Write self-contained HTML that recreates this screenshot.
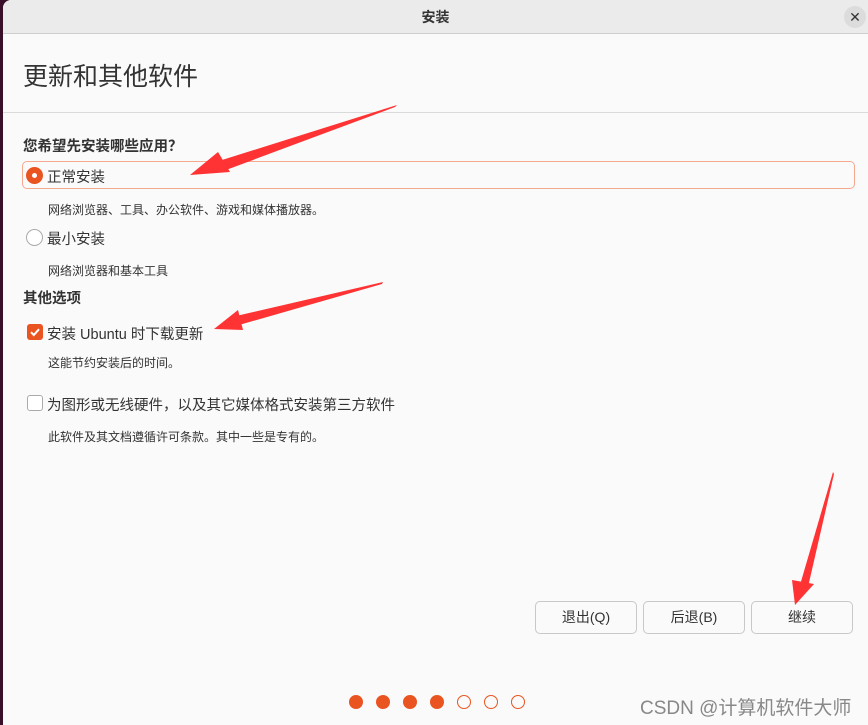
<!DOCTYPE html>
<html><head><meta charset="utf-8"><style>
*{margin:0;padding:0;box-sizing:border-box}
body{width:868px;height:725px;overflow:hidden;background:#3a0f2a;font-family:"Liberation Sans","Noto Sans CJK SC",sans-serif;color:#3d3d3d;position:relative}
.win{position:absolute;left:3px;top:0;width:865px;height:725px;background:#fafafa;border-top-left-radius:8px;overflow:hidden}
.tb{position:absolute;left:0;top:0;width:100%;height:34px;background:#ebebeb;border-bottom:1px solid #cfcfcf;text-align:center;line-height:34px;font-size:14px;font-weight:bold;color:#333}
.close{position:absolute;left:841px;top:6px;width:22px;height:22px;border-radius:50%;background:#dcdcdc;line-height:22px;font-size:14px;font-weight:normal;color:#333}
.h1{position:absolute;left:20px;top:57px;font-size:25px;color:#333}
.sep{position:absolute;left:0;top:112px;width:100%;height:1px;background:#dadada}
.t{position:absolute;font-size:14.5px;color:#333;white-space:nowrap}
.b{font-weight:bold}
.s{position:absolute;font-size:12px;color:#333;white-space:nowrap}
.sel{position:absolute;left:19px;top:161px;width:833px;height:28px;border:1.5px solid #f4a98f;border-radius:5px}
.radio{position:absolute;width:17px;height:17px;border-radius:50%}
.cb{position:absolute;width:16px;height:16px;border-radius:3px}
.btn{position:absolute;top:601px;height:33px;width:102px;border:1px solid #c8c8c8;border-radius:5px;background:#fafafa;font-size:14px;text-align:center;line-height:31px;color:#333}
.dot{position:absolute;top:695px;width:14px;height:14px;border-radius:50%;border:1.5px solid #e95420}
</style></head><body>
<div class="win">
<div class="tb">安装<div class="close">✕</div></div>
<div class="h1">更新和其他软件</div>
<div class="sep"></div>
<div class="t b" style="left:20px;top:135px">您希望先安装哪些应用？</div>
<div class="sel"></div>
<div class="radio" style="left:23px;top:167px;background:#e95420"><div style="position:absolute;left:6px;top:6px;width:5px;height:5px;border-radius:50%;background:#fff"></div></div>
<div class="t" style="left:44px;top:166px">正常安装</div>
<div class="s" style="left:45px;top:201px">网络浏览器、工具、办公软件、游戏和媒体播放器。</div>
<div class="radio" style="left:23px;top:229px;border:1px solid #aaa;background:#fff"></div>
<div class="t" style="left:44px;top:228px">最小安装</div>
<div class="s" style="left:45px;top:262px">网络浏览器和基本工具</div>
<div class="t b" style="left:20px;top:287px">其他选项</div>
<div class="cb" style="left:24px;top:324px;background:#e95420"><svg width="16" height="16"><path d="M4 8.2l2.8 2.8L12 5.2" stroke="#fff" stroke-width="2" fill="none"/></svg></div>
<div class="t" style="left:44px;top:323px">安装 Ubuntu 时下载更新</div>
<div class="s" style="left:45px;top:354px">这能节约安装后的时间。</div>
<div class="cb" style="left:24px;top:395px;border:1px solid #aaa;background:#fff"></div>
<div class="t" style="left:44px;top:394px">为图形或无线硬件，以及其它媒体格式安装第三方软件</div>
<div class="s" style="left:45px;top:428px">此软件及其文档遵循许可条款。其中一些是专有的。</div>
<div class="btn" style="left:532px">退出(Q)</div>
<div class="btn" style="left:640px">后退(B)</div>
<div class="btn" style="left:748px">继续</div>
<div class="dot" style="left:346px;background:#e95420"></div>
<div class="dot" style="left:373px;background:#e95420"></div>
<div class="dot" style="left:400px;background:#e95420"></div>
<div class="dot" style="left:427px;background:#e95420"></div>
<div class="dot" style="left:454px"></div>
<div class="dot" style="left:481px"></div>
<div class="dot" style="left:508px"></div>
<div style="position:absolute;left:637px;top:693px;font-size:19px;color:#888;white-space:nowrap">CSDN @计算机软件大师</div>
</div>
<svg style="position:absolute;left:0;top:0" width="868" height="725">
<g fill="#f33">
<polygon points="397,105 222,160 226,170 395,107"/>
<polygon points="190,175 218,152 230,172"/>
<polygon points="383,282 236,316 239,325 382,284"/>
<polygon points="214,329 238,310 243,330"/>
<polygon points="833,472 800,585 808,587 834,474"/>
<polygon points="795,605 792,580 814,584"/>
</g>
</svg>
</body></html>
